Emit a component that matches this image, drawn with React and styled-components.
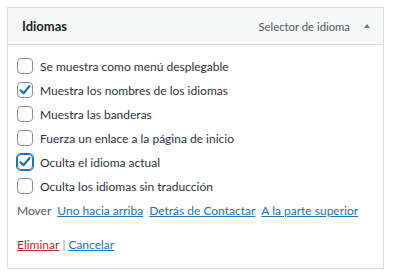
import React, { useState } from 'react';
import styled, { createGlobalStyle } from 'styled-components';

const GlobalStyle = createGlobalStyle`
  body {
    margin: 0;
    background: #fff;
    font-family: Lato, "Open Sans", sans-serif;
  }
`;

const Page = styled.div`
  padding: 7px 0 0 7px;
`;

const Widget = styled.div`
  width: 377px;
  box-sizing: border-box;
  border: 1px solid #dcdcde;
  background: #fff;
`;

const Header = styled.div`
  display: flex;
  align-items: center;
  height: 36px;
  padding: 0 13px 0 14px;
  background: #f6f7f7;
  border-bottom: 1px solid #dcdcde;
`;

const Title = styled.h3`
  margin: 0;
  flex: 1;
  font-size: 13px;
  font-weight: 700;
  color: #1d2327;
`;

const Subtitle = styled.span`
  font-size: 11.3px;
  color: #50575e;
`;

const Arrow = styled.span`
  width: 0;
  height: 0;
  margin-left: 14px;
  border-left: 3px solid transparent;
  border-right: 3px solid transparent;
  border-bottom: 4px solid #787c82;
`;

const Body = styled.div`
  display: flex;
  flex-direction: column;
  padding: 9px 9px 12px;
`;

const Row = styled.label`
  display: flex;
  align-items: center;
  gap: 7px;
  height: 24px;
  font-size: 12px;
  color: #2c3338;
  white-space: nowrap;
  cursor: pointer;
`;

const Box = styled.span`
  width: 16px;
  height: 16px;
  box-sizing: border-box;
  border-radius: 4px;
  border: 1px solid ${(p) => (p.$focus ? '#2271b1' : '#8c8f94')};
  box-shadow: ${(p) => (p.$focus ? '0 0 0 1px #2271b1' : 'none')};
  display: flex;
  align-items: center;
  justify-content: center;
  flex: none;
`;

const Actions = styled.div`
  display: flex;
  align-items: center;
  gap: 6px;
  height: 24px;
  font-size: 12px;
  color: #50575e;
  white-space: nowrap;
`;

const Link = styled.a`
  color: ${(p) => (p.$danger ? '#b32d2e' : '#2271b1')};
  text-decoration: underline;
  cursor: pointer;
`;

const Footer = styled.div`
  display: flex;
  align-items: center;
  height: 24px;
  margin-top: 10px;
  font-size: 12px;
  color: #8c8f94;
`;

const Sep = styled.span`
  margin: 0 3px;
`;

const Check = () => (
  <svg width="14" height="14" viewBox="0 0 14 14">
    <polyline
      points="2.5,7.2 5.6,10.2 11.5,3"
      fill="none"
      stroke="#2271b1"
      strokeWidth="2.2"
      strokeLinecap="round"
      strokeLinejoin="round"
    />
  </svg>
);

const options = [
  { label: 'Se muestra como menú desplegable', checked: false },
  { label: 'Muestra los nombres de los idiomas', checked: true },
  { label: 'Muestra las banderas', checked: false },
  { label: 'Fuerza un enlace a la página de inicio', checked: false },
  { label: 'Oculta el idioma actual', checked: true, focus: true },
  { label: 'Oculta los idiomas sin traducción', checked: false },
];

const App = () => {
  const [values, setValues] = useState(options.map((o) => o.checked));

  const toggle = (i) => {
    const next = [...values];
    next[i] = !next[i];
    setValues(next);
  };

  return (
    <Page>
      <GlobalStyle />
      <Widget>
        <Header>
          <Title>Idiomas</Title>
          <Subtitle>Selector de idioma</Subtitle>
          <Arrow />
        </Header>
        <Body>
          {options.map((o, i) => (
            <Row key={o.label} onClick={() => toggle(i)}>
              <Box $focus={o.focus}>{values[i] ? <Check /> : null}</Box>
              {o.label}
            </Row>
          ))}
          <Actions>
            Mover
            <Link>Uno hacia arriba</Link>
            <Link>Detrás de Contactar</Link>
            <Link>A la parte superior</Link>
          </Actions>
          <Footer>
            <Link $danger>Eliminar</Link>
            <Sep>|</Sep>
            <Link>Cancelar</Link>
          </Footer>
        </Body>
      </Widget>
    </Page>
  );
};

export default App;
